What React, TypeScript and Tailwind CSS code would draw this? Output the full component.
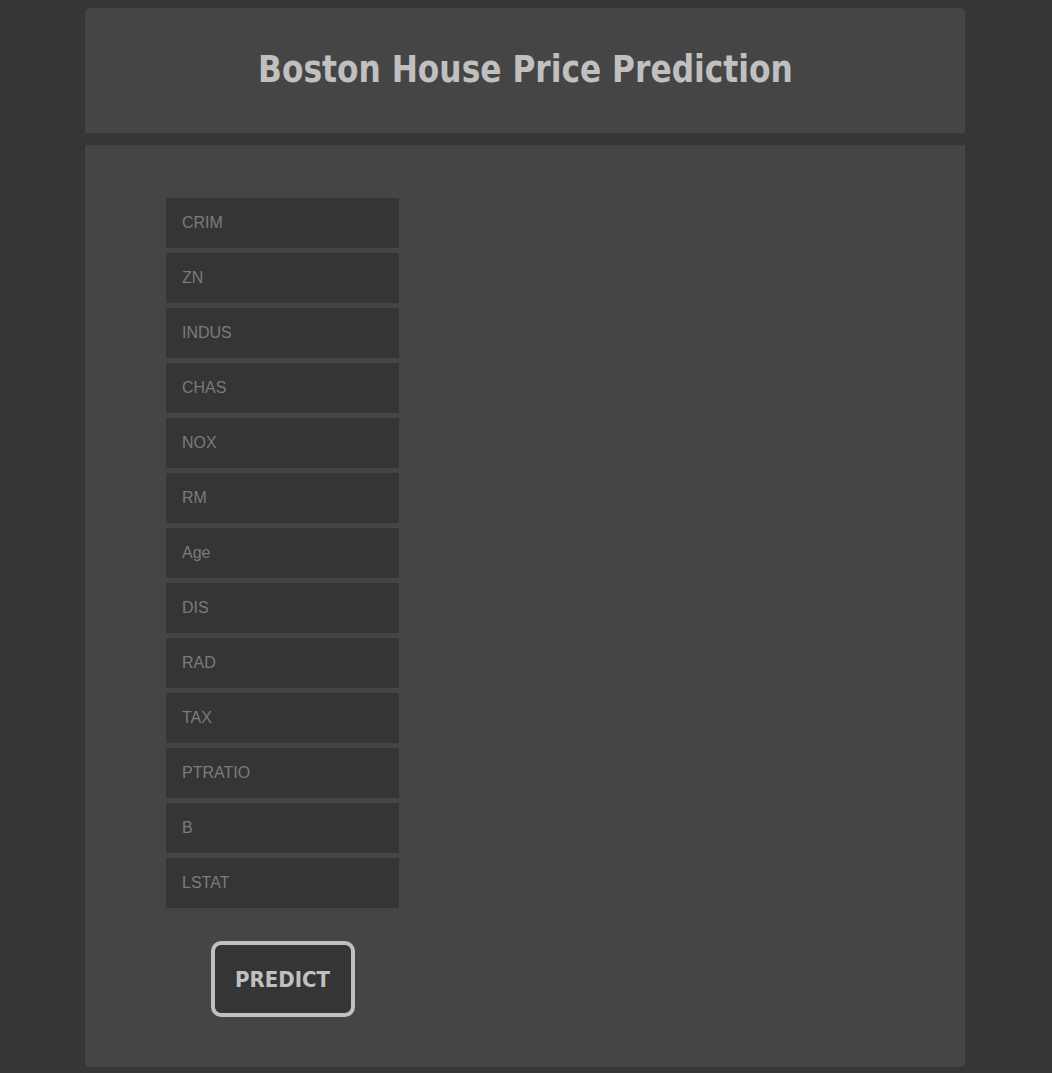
import { useState } from "react";

const fields = [
  "CRIM",
  "ZN",
  "INDUS",
  "CHAS",
  "NOX",
  "RM",
  "Age",
  "DIS",
  "RAD",
  "TAX",
  "PTRATIO",
  "B",
  "LSTAT",
];

const App = () => {
  const [values, setValues] = useState<Record<string, string>>({});

  return (
    <div className="min-h-[1073px] bg-[#363636] pt-2 font-['Liberation_Sans',Arial,sans-serif]">
      <div className="ml-[85px] w-[880px]">
        <header className="flex h-[125px] items-center justify-center rounded-t-[5px] bg-[#454545]">
          <h1 className="scale-x-[0.94] pb-[2px] font-['DejaVu_Sans_Condensed',sans-serif] text-[37px] font-bold text-[#c0c0c0]">
            Boston House Price Prediction
          </h1>
        </header>

        <main className="mt-3 h-[922px] rounded-b-[5px] bg-[#454545] pl-[81px] pt-[53px]">
          <form
            className="flex w-[233px] flex-col"
            onSubmit={(e) => e.preventDefault()}
          >
            <div className="flex flex-col gap-[5px]">
              {fields.map((f) => (
                <input
                  key={f}
                  type="text"
                  placeholder={f}
                  value={values[f] || ""}
                  onChange={(e) => setValues({ ...values, [f]: e.target.value })}
                  className="h-[50px] w-full bg-[#353535] px-4 text-[16px] text-[#c0c0c0] placeholder:text-[#7b7b7b] focus:outline-none"
                />
              ))}
            </div>

            <button
              type="submit"
              className="mx-auto mt-[33px] h-[76px] w-[144px] rounded-[10px] border-4 border-[#c0c0c0] bg-[#353535] font-['DejaVu_Sans_Condensed',sans-serif] text-[22px] font-bold text-[#c0c0c0]"
            >
              PREDICT
            </button>
          </form>
        </main>
      </div>
    </div>
  );
};

export default App;
